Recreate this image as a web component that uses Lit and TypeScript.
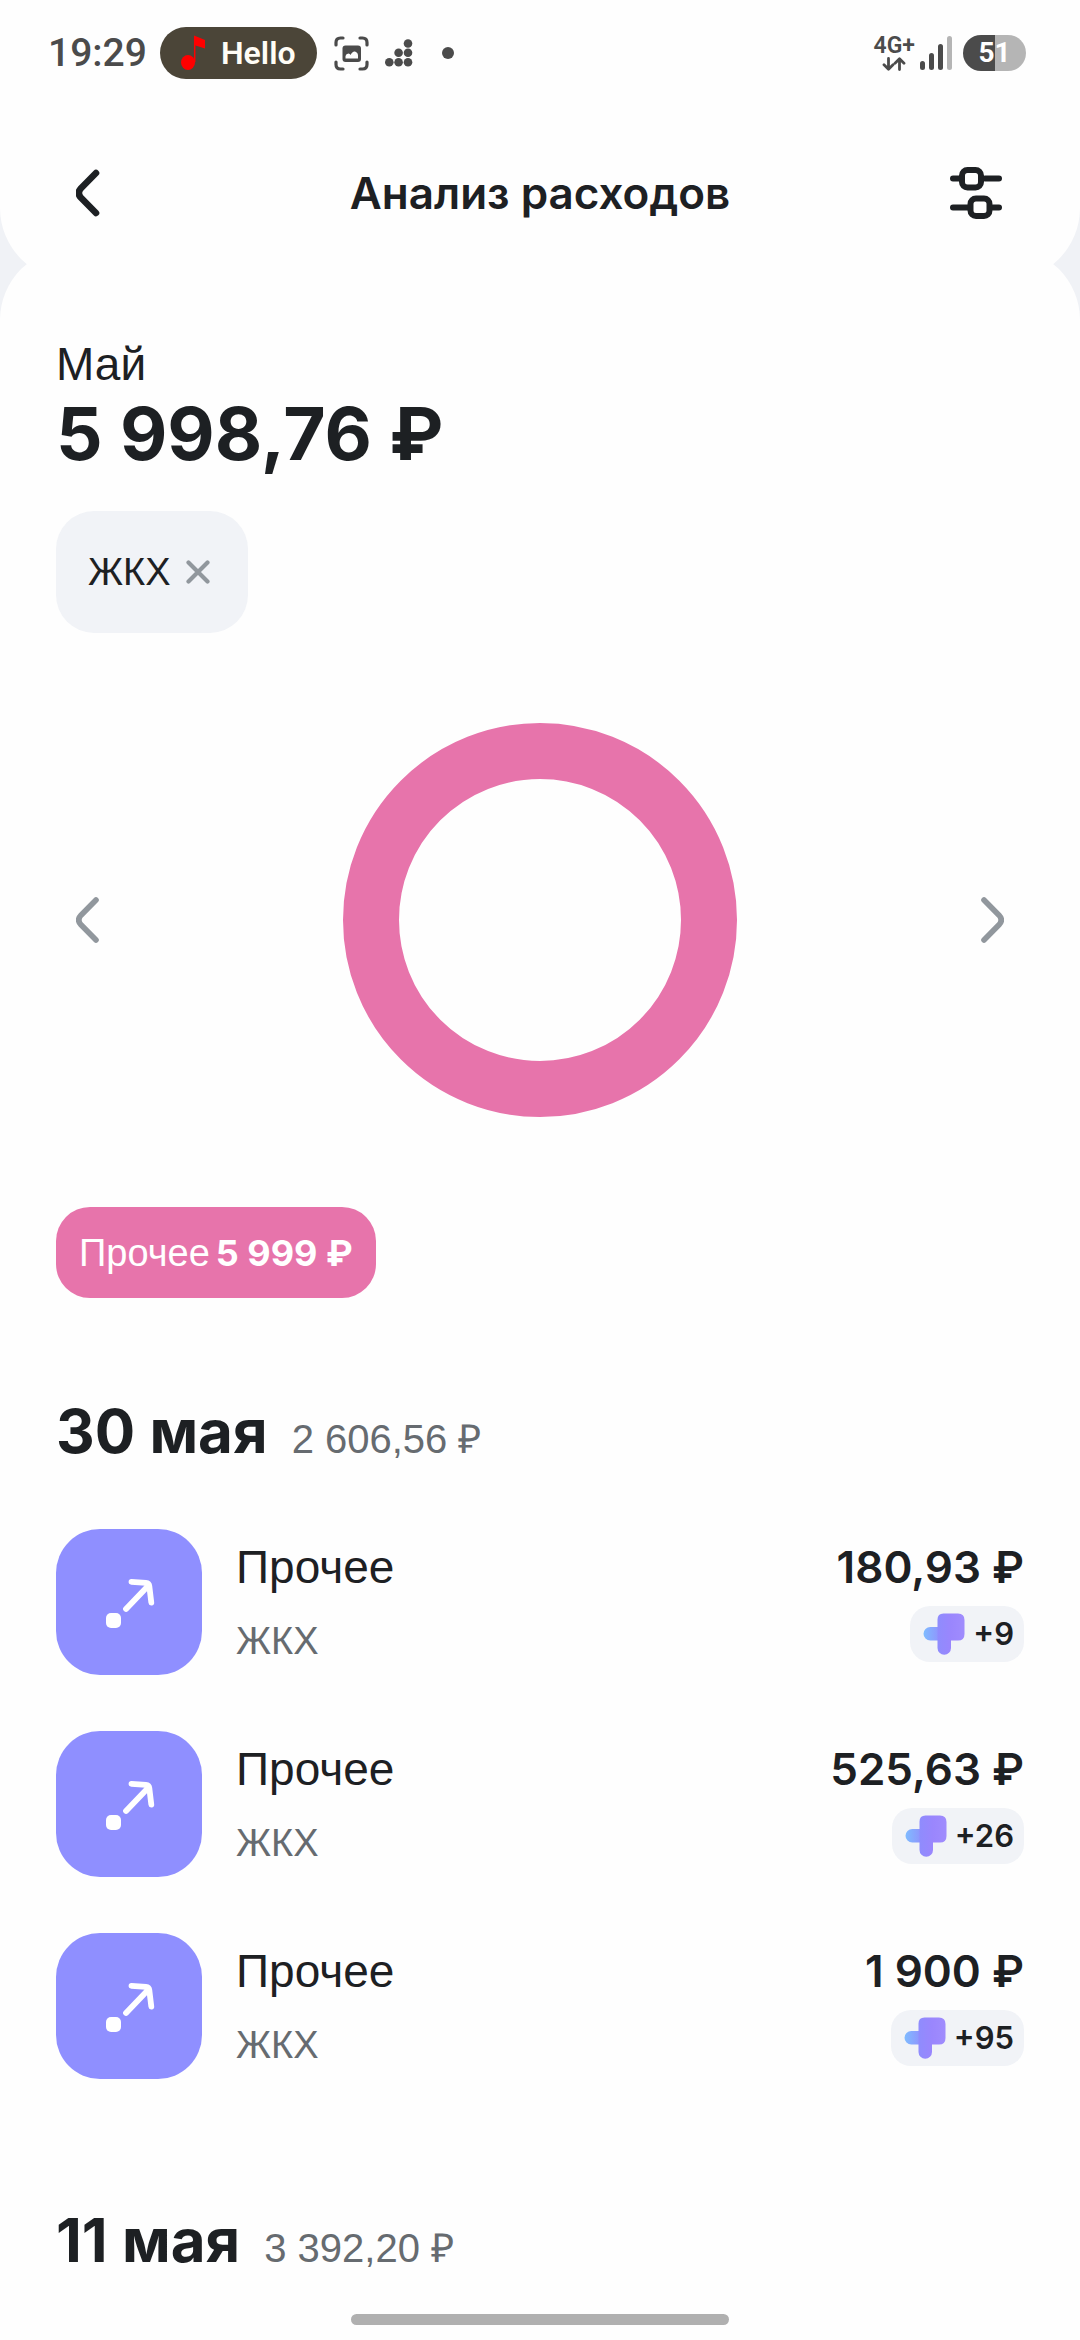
import { LitElement, html, css, svg } from "lit";
import { customElement, property } from "lit/decorators.js";

interface Operation {
  title: string;
  category: string;
  amount: string;
  bonus: string;
}

interface Day {
  date: string;
  total: string;
  operations: Operation[];
}

const days: Day[] = [
  {
    date: "30 мая",
    total: "2 606,56 ₽",
    operations: [
      { title: "Прочее", category: "ЖКХ", amount: "180,93 ₽", bonus: "+9" },
      { title: "Прочее", category: "ЖКХ", amount: "525,63 ₽", bonus: "+26" },
      { title: "Прочее", category: "ЖКХ", amount: "1 900 ₽", bonus: "+95" },
    ],
  },
  { date: "11 мая", total: "3 392,20 ₽", operations: [] },
];

const chevron = (direction: "left" | "right", weight: number) => html`
  <svg width="24" height="48" viewBox="0 0 24 48" fill="none" stroke="currentColor"
    stroke-width=${weight} stroke-linecap="round" aria-hidden="true">
    ${direction === "left"
      ? svg`<path d="M20 4 L5 19.200 Q0.500 24 5 28.800 L20 44" />`
      : svg`<path d="M4 4 L19 19.200 Q23.500 24 19 28.800 L4 44" />`}
  </svg>
`;

@customElement("status-bar")
export class StatusBar extends LitElement {
  static styles = css`
    :host {
      display: flex;
      align-items: center;
      justify-content: space-between;
      height: 52px;
      padding: 27px 54px 0 48px;
      color: #4b4b4b;
      font-family: Roboto, "Liberation Sans", sans-serif;
    }
    .side {
      display: flex;
      align-items: center;
    }
    .time {
      font-size: 39px;
      line-height: 52px;
      font-weight: 500;
    }
    .pill {
      display: flex;
      align-items: center;
      gap: 14px;
      height: 52px;
      margin-left: 13px;
      padding: 0 21px;
      border-radius: 26px;
      background: #4b4538;
      color: #fffdf6;
      font-size: 32px;
      line-height: 52px;
      font-weight: 600;
    }
    .capture {
      margin-left: 17px;
    }
    .dots {
      margin-left: 16px;
    }
    .dot {
      width: 12px;
      height: 12px;
      margin-left: 29px;
      border-radius: 50%;
      background: currentColor;
    }
    .network {
      display: flex;
      flex-direction: column;
      align-items: center;
      gap: 1px;
      font-size: 23px;
      line-height: 20px;
      font-weight: 600;
    }
    .bars {
      margin-left: 5px;
    }
    .battery {
      display: flex;
      align-items: center;
      justify-content: center;
      width: 63px;
      height: 36px;
      margin-left: 11px;
      border-radius: 18px;
      background: linear-gradient(90deg, #4b4b4b 51%, #b5b5b5 51%);
      color: #fff;
      font-size: 28px;
      line-height: 36px;
      font-weight: 700;
    }
  `;

  render() {
    return html`
      <div class="side">
        <span class="time">19:29</span>
        <span class="pill">
          <svg width="26" height="36" viewBox="0 0 26 36" aria-hidden="true">
            <ellipse cx="7" cy="27.500" rx="7" ry="7.500" fill="#f00" />
            <path d="M13.700 27 V1.500" stroke="#f00" stroke-width="1.500" />
            <path d="M13 0.500 L24 5 V13.500 L13 10 Z" fill="#f00" />
          </svg>
          Hello
        </span>
        <svg class="capture" width="35" height="35" viewBox="0 0 35 35" fill="none" stroke="currentColor"
          stroke-width="3.200" stroke-linecap="round" aria-hidden="true">
          <path d="M2 9 V6.500 Q2 2 6.500 2 H9 M26 2 H28.500 Q33 2 33 6.500 V9 M33 26 V28.500 Q33 33 28.500 33 H26 M9 33 H6.500 Q2 33 2 28.500 V26" />
          <rect x="8.500" y="9.500" width="18.500" height="16.500" rx="3" fill="currentColor" stroke="none" />
          <path d="M11.500 22.500 V20 Q12 17.500 14.500 17.500 Q16 17.500 16.500 19 Q18.500 15 21 15.500 Q24 16.500 24 19.500 V22.500 Z" fill="#fefefe" stroke="none" />
        </svg>
        <svg class="dots" width="28" height="28" viewBox="0 0 28 28" fill="currentColor" aria-hidden="true">
          <circle cx="23" cy="4.500" r="4.300" />
          <circle cx="13.600" cy="13.800" r="4.300" />
          <circle cx="23" cy="13.800" r="4.300" />
          <circle cx="4.300" cy="23.200" r="4.300" />
          <circle cx="13.600" cy="23.200" r="4.300" />
          <circle cx="23" cy="23.200" r="4.300" />
        </svg>
        <span class="dot"></span>
      </div>
      <div class="side">
        <span class="network">
          4G+
          <svg width="24" height="14" viewBox="0 0 24 14" fill="none" stroke="currentColor" stroke-width="2.800"
            stroke-linecap="round" stroke-linejoin="round" aria-hidden="true">
            <path d="M6.500 1.500 V12 M2 7.800 L6.500 12.300 L11 7.800 M17.500 12.500 V2 M13 6.200 L17.500 1.700 L22 6.200" />
          </svg>
        </span>
        <svg class="bars" width="32" height="34" viewBox="0 0 32 34" aria-hidden="true">
          <rect x="0" y="25" width="5" height="9" rx="2.500" fill="currentColor" />
          <rect x="9" y="17" width="5" height="17" rx="2.500" fill="currentColor" />
          <rect x="18" y="8" width="5" height="26" rx="2.500" fill="currentColor" />
          <rect x="27" y="0" width="5" height="34" rx="2.500" fill="#b5b5b5" />
        </svg>
        <span class="battery">51</span>
      </div>
    `;
  }
}

@customElement("operation-row")
export class OperationRow extends LitElement {
  @property({ attribute: false }) operation!: Operation;

  static styles = css`
    :host {
      display: flex;
      align-items: flex-start;
      gap: 34px;
    }
    .tile {
      flex: none;
      border-radius: 44px;
      background: #8f8fff;
    }
    .names {
      flex: 1;
      display: flex;
      flex-direction: column;
      gap: 18px;
      padding-top: 10px;
    }
    .title {
      font: 400 46px/56px "Liberation Sans", Arial, sans-serif;
    }
    .category {
      color: #666b70;
      font: 400 38px/56px "Liberation Sans", Arial, sans-serif;
    }
    .values {
      display: flex;
      flex-direction: column;
      align-items: flex-end;
      gap: 11px;
      padding-top: 10px;
    }
    .amount {
      font-size: 44px;
      line-height: 56px;
      font-weight: 600;
    }
    .bonus {
      display: flex;
      align-items: center;
      gap: 8px;
      height: 56px;
      padding: 0 10px 0 13px;
      border-radius: 20px;
      background: #f1f3f7;
      font-size: 31px;
      line-height: 56px;
      font-weight: 600;
    }
  `;

  render() {
    const { title, category, amount, bonus } = this.operation;
    return html`
      <svg class="tile" width="146" height="146" viewBox="0 0 146 146" fill="none" aria-hidden="true">
        <rect x="50" y="84" width="15" height="15" rx="5" fill="#fff" />
        <path d="M70 80 L92 57 M75.500 52.800 L90 53.800 Q93 54 93.300 57 L95.300 73.500" stroke="#fff"
          stroke-width="5.800" stroke-linecap="round" stroke-linejoin="round" />
      </svg>
      <div class="names">
        <span class="title">${title}</span>
        <span class="category">${category}</span>
      </div>
      <div class="values">
        <span class="amount">${amount}</span>
        <span class="bonus">
          <svg width="42" height="42" viewBox="0 0 42 42" aria-hidden="true">
            <defs>
              <linearGradient id="bonus-arm" x1="0" y1="0" x2="1" y2="0">
                <stop offset="0" stop-color="#7fbcff" />
                <stop offset="1" stop-color="#8f95fd" />
              </linearGradient>
              <linearGradient id="bonus-body" x1="0" y1="0" x2="1" y2="0">
                <stop offset="0" stop-color="#8f8cfd" />
                <stop offset="0.500" stop-color="#9a86fd" />
                <stop offset="1" stop-color="#a08cfd" />
              </linearGradient>
            </defs>
            <path d="M7.300 14 H16 V27.600 H7.300 A6.800 6.800 0 0 1 7.300 14 Z" fill="url(#bonus-arm)" />
            <path d="M20.500 0.500 H35 Q41.500 0.500 41.500 7 V21 Q41.500 27.600 35 27.600 H28 V35 A6.750 6.750 0 0 1 14.500 35 V6.500 Q14.500 0.500 20.500 0.500 Z"
              fill="url(#bonus-body)" />
          </svg>
          ${bonus}
        </span>
      </div>
    `;
  }
}

@customElement("app-root")
export class AppRoot extends LitElement {
  static styles = css`
    :host {
      display: flex;
      flex-direction: column;
      min-height: 100vh;
      background: #f0f2f6;
      color: #1d2023;
      font-family: Inter, Roboto, sans-serif;
    }
    button {
      margin: 0;
      padding: 0;
      border: 0;
      background: none;
      color: inherit;
      font: inherit;
    }
    svg {
      display: block;
    }
    .header {
      padding-bottom: 39px;
      border-radius: 0 0 72px 72px;
      background: #fefefe;
    }
    .toolbar {
      display: grid;
      grid-template-columns: 96px 1fr 96px;
      align-items: center;
      height: 96px;
      margin-top: 66px;
      padding: 0 40px;
    }
    .icon-button {
      display: flex;
      align-items: center;
      justify-content: center;
      width: 96px;
      height: 96px;
    }
    .filters {
      justify-content: flex-start;
      padding-left: 6px;
    }
    .heading {
      margin: 0;
      font-size: 44px;
      line-height: 56px;
      font-weight: 600;
      text-align: center;
    }
    .sheet {
      flex: 1;
      margin-top: -32px;
      padding: 88px 56px 64px;
      border-radius: 72px 72px 0 0;
      background: #fefefe;
    }
    .month {
      margin: 0;
      font: 400 46px/56px "Liberation Sans", Arial, sans-serif;
    }
    .total {
      margin: 0;
      font-size: 73px;
      line-height: 84px;
      font-weight: 700;
    }
    .chip {
      display: flex;
      align-items: center;
      gap: 15px;
      height: 122px;
      margin-top: 35px;
      padding: 0 38px 0 32px;
      border-radius: 38px;
      background: #f1f3f7;
      font: 400 38px/48px "Liberation Sans", Arial, sans-serif;
    }
    .close {
      color: #91979d;
    }
    .chart {
      display: flex;
      align-items: center;
      justify-content: space-between;
      margin: 90px -16px;
    }
    .muted {
      color: #91979d;
    }
    .legend {
      display: flex;
      align-items: center;
      gap: 6px;
      height: 91px;
      padding: 0 23px;
      border-radius: 34px;
      background: #e774ab;
      color: #fff;
      font: 400 38px/48px "Liberation Sans", Arial, sans-serif;
    }
    .legend-sum {
      font: 700 36px/48px Inter, Roboto, sans-serif;
    }
    .day {
      display: flex;
      align-items: baseline;
      gap: 24px;
      height: 64px;
      margin-top: 101px;
    }
    .date {
      margin: 0;
      font-size: 60px;
      line-height: 64px;
      font-weight: 700;
    }
    .day-total {
      color: #666b70;
      font: 400 40px/48px "Liberation Sans", Arial, sans-serif;
    }
    .list {
      display: flex;
      flex-direction: column;
      gap: 56px;
      margin: 0;
      padding: 66px 0 28px;
      list-style: none;
    }
    .home {
      position: fixed;
      bottom: 15px;
      left: 50%;
      width: 35%;
      height: 11px;
      border-radius: 6px;
      background: #b0b0b0;
      transform: translateX(-50%);
    }
  `;

  render() {
    return html`
      <header class="header">
        <status-bar></status-bar>
        <div class="toolbar">
          <button class="icon-button" aria-label="Назад">${chevron("left", 6.6)}</button>
          <h1 class="heading">Анализ расходов</h1>
          <button class="icon-button filters" aria-label="Фильтры">
            <svg width="52" height="54" viewBox="0 0 52 54" fill="none" stroke="currentColor" stroke-width="6"
              stroke-linecap="round" aria-hidden="true">
              <path d="M3 12.500 H10 M35 12.500 H49 M3 41.500 H18 M43 41.500 H49" />
              <rect x="12" y="4" width="19" height="17.500" rx="5.500" />
              <rect x="20.500" y="32.500" width="19" height="17.500" rx="5.500" />
            </svg>
          </button>
        </div>
      </header>
      <main class="sheet">
        <p class="month">Май</p>
        <p class="total">5 998,76 ₽</p>
        <button class="chip">
          ЖКХ
          <svg class="close" width="24" height="24" viewBox="0 0 24 24" stroke="currentColor" stroke-width="4.200"
            stroke-linecap="round" aria-hidden="true">
            <path d="M2.500 2.500 L21.500 21.500 M21.500 2.500 L2.500 21.500" />
          </svg>
        </button>
        <section class="chart">
          <button class="icon-button muted" aria-label="Предыдущий месяц">${chevron("left", 5.6)}</button>
          <svg width="394" height="394" viewBox="0 0 394 394" fill="none" aria-hidden="true">
            <circle cx="197" cy="197" r="169" stroke="#e774ab" stroke-width="56" />
          </svg>
          <button class="icon-button muted" aria-label="Следующий месяц">${chevron("right", 5.6)}</button>
        </section>
        <button class="legend">
          <span>Прочее</span>
          <span class="legend-sum">5 999 ₽</span>
        </button>
        ${days.map(
          (day) => html`
            <section>
              <div class="day">
                <h2 class="date">${day.date}</h2>
                <span class="day-total">${day.total}</span>
              </div>
              ${day.operations.length
                ? html`<ul class="list">
                    ${day.operations.map(
                      (operation) => html`<li><operation-row .operation=${operation}></operation-row></li>`
                    )}
                  </ul>`
                : null}
            </section>
          `
        )}
      </main>
      <div class="home"></div>
    `;
  }
}
